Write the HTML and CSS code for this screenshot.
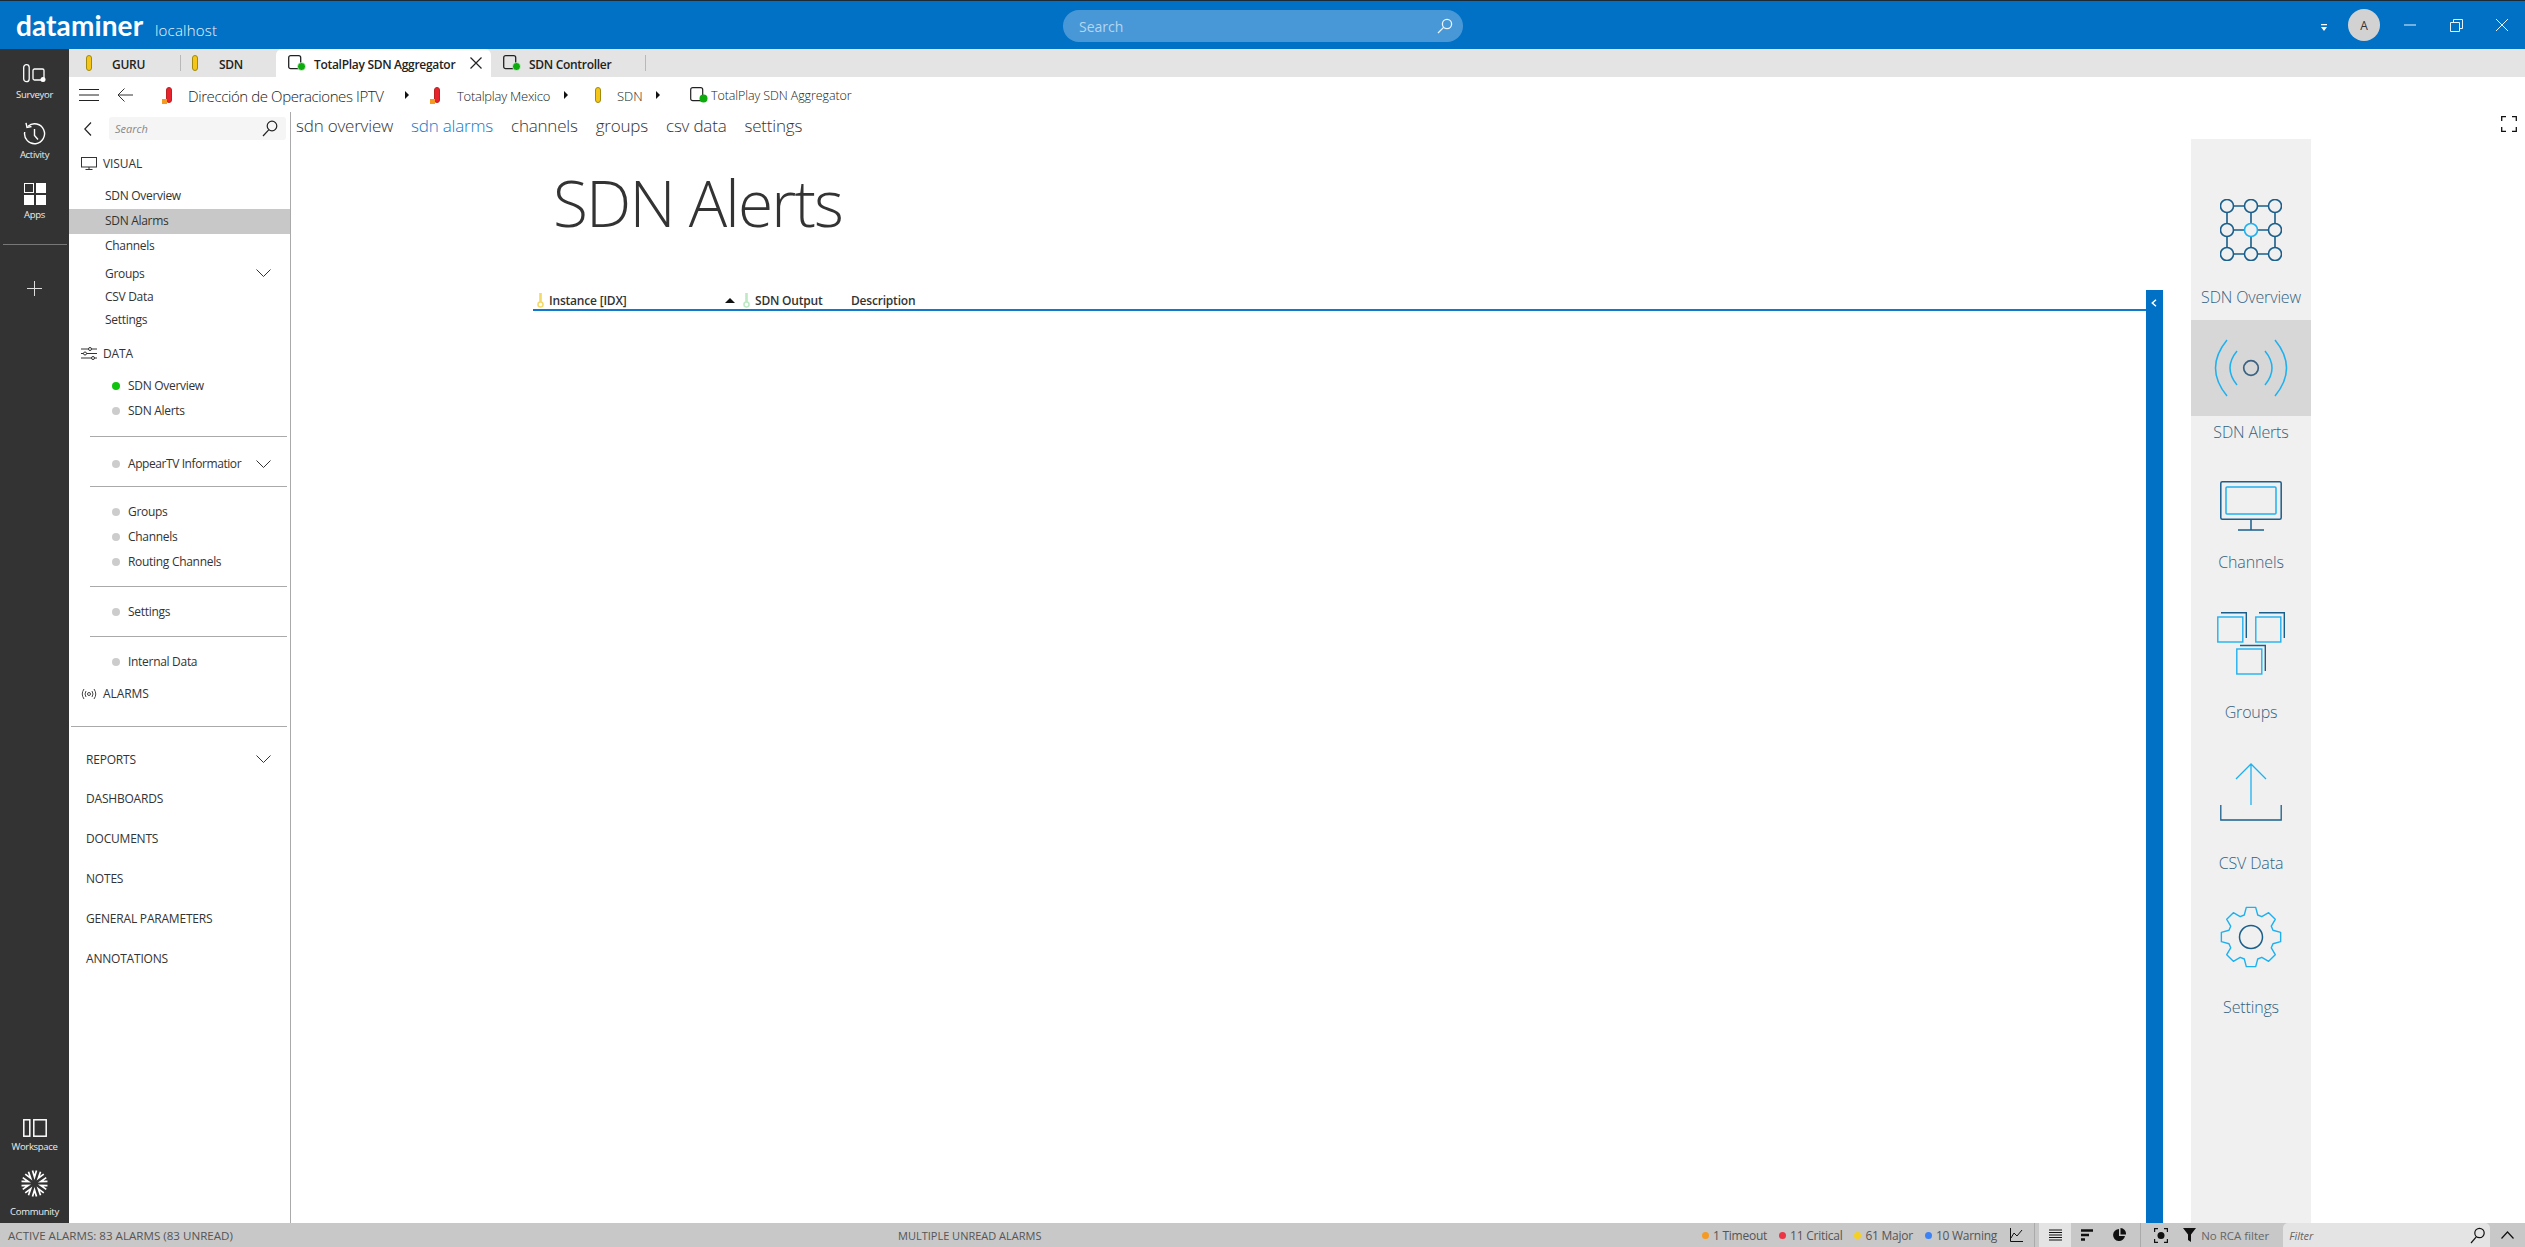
FILE: index.html
```html
<!DOCTYPE html>
<html lang="en">
<head>
<meta charset="utf-8">
<title>DataMiner</title>
<link rel="stylesheet" href="styles.css">
</head>
<body>
<div class="app">
  <header class="topbar">
    <div class="brand"><span class="logo">dataminer</span><span class="host">localhost</span></div>
    <div class="global-search"><span>Search</span>
      <svg width="16" height="16" viewBox="0 0 16 16" class="stroke-white"><circle cx="10" cy="6" r="4.6"/><path d="M6.6 9.400 1 15"/></svg>
    </div>
    <div class="win">
      <svg class="win-drop" width="6" height="7" viewBox="0 0 6 7"><path d="M0 0h6v1.200H0zM0 3h6L3 7z" fill="#fff"/></svg>
      <div class="avatar">A</div>
      <svg class="win-min" width="12" height="2" viewBox="0 0 12 2"><path d="M0 1h12" stroke="#e8f2fa"/></svg>
      <svg class="win-res" width="13" height="13" viewBox="0 0 13 13"><path d="M3.500 3V.5h9v9H10M.5 3.500h9v9h-9z" fill="none" stroke="#e8f2fa"/></svg>
      <svg class="win-close" width="12" height="12" viewBox="0 0 12 12"><path d="M0 0l12 12M12 0 0 12" stroke="#e8f2fa"/></svg>
    </div>
  </header>

  <div class="middle">
    <aside class="rail">
      <div class="rail-top">
        <div class="rail-item r1">
          <svg width="23" height="19" viewBox="0 0 23 19" fill="none" stroke="#fff" stroke-width="1.300"><rect x=".7" y=".7" width="5.500" height="17" rx="2.700"/><rect x="10" y="5" width="11" height="11" rx="1.500"/><circle cx="20" cy="15.500" r="2.500" fill="#fff" stroke="none"/></svg>
          <span>Surveyor</span>
        </div>
        <div class="rail-item r2">
          <svg width="23" height="24" viewBox="0 0 23 24" fill="none" stroke="#fff" stroke-width="1.400"><path d="M5 4.200A10 10 0 1 1 1.700 10"/><path d="M3 .8 4 5.500l4.500-1"/><path d="M11.500 7v6.500l3.500 4"/></svg>
          <span>Activity</span>
        </div>
        <div class="rail-item r3">
          <svg width="22" height="22" viewBox="0 0 22 22"><rect x=".5" y=".5" width="9" height="9" fill="none" stroke="#fff"/><rect x="12" width="10" height="10" fill="#fff"/><rect y="12" width="10" height="10" fill="#fff"/><rect x="12" y="12" width="10" height="10" fill="#fff"/></svg>
          <span>Apps</span>
        </div>
        <div class="rail-rule"></div>
        <svg class="rail-plus" width="15" height="15" viewBox="0 0 15 15"><path d="M7.500 0v15M0 7.500h15" stroke="#ddd"/></svg>
      </div>
      <div class="rail-bottom">
        <div class="rail-item r4">
          <svg width="24" height="18" viewBox="0 0 24 18" fill="none" stroke="#fff" stroke-width="1.500"><rect x=".8" y=".8" width="6" height="16.400"/><rect x="10.800" y=".8" width="12.400" height="16.400"/></svg>
          <span>Workspace</span>
        </div>
        <div class="rail-item r5">
          <svg width="27" height="27" viewBox="-13.500 -13.500 27 27" fill="none" stroke="#fff" stroke-width="1.700">
            <defs><path id="spark" d="M-2-13 0-6.500 2-13"/></defs>
            <use href="#spark"/><use href="#spark" transform="rotate(36)"/><use href="#spark" transform="rotate(72)"/><use href="#spark" transform="rotate(108)"/><use href="#spark" transform="rotate(144)"/><use href="#spark" transform="rotate(180)"/><use href="#spark" transform="rotate(216)"/><use href="#spark" transform="rotate(252)"/><use href="#spark" transform="rotate(288)"/><use href="#spark" transform="rotate(324)"/>
          </svg>
          <span>Community</span>
        </div>
      </div>
    </aside>

    <div class="workspace">
      <nav class="tabs">
        <div class="tab tab-guru"><i class="pill pill-y"></i><b>GURU</b></div>
        <div class="tab tab-sdn"><i class="pill pill-y"></i><b>SDN</b></div>
        <div class="tab tab-active">
          <svg class="el" width="18" height="16" viewBox="0 0 18 16"><rect x=".7" y=".7" width="12" height="13" rx="2" fill="none" stroke="#222" stroke-width="1.300"/><circle cx="13.500" cy="11.500" r="4" fill="#0dab0d" stroke="#fff" stroke-width=".6"/></svg>
          <b>TotalPlay SDN Aggregator</b>
          <svg class="tab-x" width="12" height="12" viewBox="0 0 12 12"><path d="M.5.500l11 11M11.500.5l-11 11" stroke="#222" stroke-width="1.200"/></svg>
        </div>
        <div class="tab tab-ctrl">
          <svg class="el" width="18" height="16" viewBox="0 0 18 16"><rect x=".7" y=".7" width="12" height="13" rx="2" fill="none" stroke="#222" stroke-width="1.300"/><circle cx="13.500" cy="11.500" r="4" fill="#0dab0d" stroke="#fff" stroke-width=".6"/></svg>
          <b>SDN Controller</b>
        </div>
      </nav>

      <div class="crumbs">
        <svg class="c-menu" width="20" height="12" viewBox="0 0 20 12"><path d="M0 .5h20M0 6h20M0 11.500h20" stroke="#222"/></svg>
        <svg class="c-back" width="16" height="14" viewBox="0 0 16 14"><path d="M7.500 .5 1 7l6.500 6.500M1 7h15" fill="none" stroke="#333"/></svg>
        <span class="alarm-pill c-p1"><i class="pill pill-r"></i><em></em></span>
        <span class="c-t1">Dirección de Operaciones IPTV</span>
        <i class="tri c-a1"></i>
        <span class="alarm-pill c-p2"><i class="pill pill-r"></i><em></em></span>
        <span class="c-t2">Totalplay Mexico</span>
        <i class="tri c-a2"></i>
        <i class="pill pill-y c-p3"></i>
        <span class="c-t3">SDN</span>
        <i class="tri c-a3"></i>
        <svg class="c-el" width="18" height="16" viewBox="0 0 18 16"><rect x=".7" y=".7" width="12" height="13" rx="2" fill="none" stroke="#222" stroke-width="1.200"/><circle cx="13.500" cy="11.500" r="4" fill="#0dab0d"/></svg>
        <span class="c-t4">TotalPlay SDN Aggregator</span>
      </div>

      <div class="body">
        <aside class="nav">
          <div class="nav-search">
            <svg width="8" height="14" viewBox="0 0 8 14"><path d="M7 .5.800 7 7 13.500" fill="none" stroke="#222" stroke-width="1.200"/></svg>
            <div class="nav-search-box"><span>Search</span>
              <svg width="16" height="17" viewBox="0 0 16 17" fill="none" stroke="#222" stroke-width="1.200"><circle cx="10" cy="6" r="4.800"/><path d="M6.700 9.800 1 16"/></svg>
            </div>
          </div>

          <div class="sec sec-visual">
            <svg width="16" height="13" viewBox="0 0 16 13" fill="none" stroke="#333"><rect x=".5" y=".5" width="15" height="9.500"/><path d="M8 10v2.500M4.500 12.500h7"/></svg>VISUAL
          </div>
          <div class="visual-list">
            <div class="item">SDN Overview</div>
            <div class="item item-on">SDN Alarms</div>
            <div class="item">Channels</div>
            <div class="item item-groups">Groups
              <svg class="chev" width="15" height="8" viewBox="0 0 15 8"><path d="M.5.500 7.500 7.500 14.500.5" fill="none" stroke="#333"/></svg>
            </div>
            <div class="item item-csv">CSV Data</div>
            <div class="item">Settings</div>
          </div>

          <div class="sec sec-data">
            <svg width="16" height="13" viewBox="0 0 16 13" fill="none" stroke="#333"><path d="M0 2h16M0 6.500h16M0 11h16"/><circle cx="9" cy="2" r="1.500" fill="#fff"/><circle cx="4" cy="6.500" r="1.500" fill="#fff"/><circle cx="12" cy="11" r="1.500" fill="#fff"/></svg>DATA
          </div>
          <div class="grp grp-a">
            <div class="ditem"><i class="dot dot-on"></i>SDN Overview</div>
            <div class="ditem"><i class="dot"></i>SDN Alerts</div>
          </div>
          <div class="grp grp-b">
            <div class="ditem"><i class="dot"></i><span class="appear">AppearTV Informatior</span>
              <svg class="chev" width="15" height="8" viewBox="0 0 15 8"><path d="M.5.500 7.500 7.500 14.500.5" fill="none" stroke="#333"/></svg>
            </div>
          </div>
          <div class="grp">
            <div class="ditem"><i class="dot"></i>Groups</div>
            <div class="ditem"><i class="dot"></i>Channels</div>
            <div class="ditem"><i class="dot"></i>Routing Channels</div>
          </div>
          <div class="grp">
            <div class="ditem"><i class="dot"></i>Settings</div>
          </div>
          <div class="grp-last">
            <div class="ditem"><i class="dot"></i>Internal Data</div>
          </div>
          <div class="sec sec-alarms">
            <svg width="16" height="12" viewBox="0 0 16 12" fill="none" stroke="#444"><path d="M3 1Q-.500 6 3 11M5 3Q3 6 5 9M13 1q3.500 5 0 10M11 3q2 3 0 6"/><circle cx="8" cy="6" r="1.500"/></svg>ALARMS
          </div>
          <div class="top-list">
            <div class="top top-reports">REPORTS
              <svg class="chev" width="15" height="8" viewBox="0 0 15 8"><path d="M.5.500 7.500 7.500 14.500.5" fill="none" stroke="#333"/></svg>
            </div>
            <div class="top">DASHBOARDS</div>
            <div class="top">DOCUMENTS</div>
            <div class="top">NOTES</div>
            <div class="top">GENERAL PARAMETERS</div>
            <div class="top">ANNOTATIONS</div>
          </div>
        </aside>

        <main class="content">
          <div class="subnav">
            <div class="subtabs">
              <span>sdn overview</span><span class="sub-on">sdn alarms</span><span>channels</span><span>groups</span><span>csv data</span><span>settings</span>
            </div>
            <svg class="full" width="16" height="16" viewBox="0 0 16 16"><path d="M.7 5V.7H5M11 .7h4.300V5M15.300 11v4.300H11M5 15.300H.7V11" fill="none" stroke="#111" stroke-width="1.300"/></svg>
          </div>
          <div class="stage">
            <div class="view">
              <h1>SDN Alerts</h1>
              <div class="tablewrap">
                <div class="table">
                  <div class="thead">
                    <div class="th th-inst">
                      <svg width="7" height="16" viewBox="0 0 7 16" fill="none" stroke="#f2d96a" stroke-width="1.600"><circle cx="3.500" cy="12.500" r="2.500"/><path d="M3.500 10V1" stroke-width="2.600"/></svg>
                      <span>Instance [IDX]</span><i class="sort"></i>
                    </div>
                    <div class="th th-out">
                      <svg width="7" height="16" viewBox="0 0 7 16" fill="none" stroke="#bfe8c4" stroke-width="1.600"><circle cx="3.500" cy="12.500" r="2.500"/><path d="M3.500 10V1" stroke-width="2.600"/></svg>
                      <span>SDN Output</span>
                    </div>
                    <div class="th th-desc"><span>Description</span></div>
                  </div>
                </div>
                <div class="bar">
                  <svg width="6" height="8" viewBox="0 0 6 8"><path d="M5 .8 1.300 4 5 7.200" fill="none" stroke="#fff" stroke-width="1.500"/></svg>
                </div>
              </div>
            </div>

            <div class="panel">
              <div class="tile t1">
                <svg width="62" height="62" viewBox="0 0 62 62" fill="none" stroke="#1a5f8c" stroke-width="1.600">
                  <path d="M7 7h48M7 31h48M7 55h48M7 7v48M31 7v48M55 7v48"/>
                  <g fill="#f0f0f0"><circle cx="7" cy="7" r="6.500"/><circle cx="31" cy="7" r="6.500"/><circle cx="55" cy="7" r="6.500"/><circle cx="7" cy="31" r="6.500"/><circle cx="55" cy="31" r="6.500"/><circle cx="7" cy="55" r="6.500"/><circle cx="31" cy="55" r="6.500"/><circle cx="55" cy="55" r="6.500"/><circle cx="31" cy="31" r="6.500" stroke="#1eb1f0"/></g>
                </svg>
                <span>SDN Overview</span>
              </div>
              <div class="tile t2">
                <div class="tile-on">
                  <svg width="76" height="58" viewBox="0 0 76 58" fill="none" stroke="#1eb1f0" stroke-width="1.500">
                    <path d="M14 1Q-9 29 14 57M62 1q23 28 0 56M24 12Q10 29 24 46M52 12q14 17 0 34"/>
                    <circle cx="38" cy="29" r="7.300" stroke="#3b6282" stroke-width="1.700"/>
                  </svg>
                </div>
                <span>SDN Alerts</span>
              </div>
              <div class="tile t3">
                <svg width="62" height="50" viewBox="0 0 62 50" fill="none" stroke-width="1.500">
                  <rect x=".8" y=".8" width="60.400" height="37.400" rx="1.500" stroke="#1a5f8c"/>
                  <rect x="6" y="6" width="50" height="27" rx="1" stroke="#1eb1f0"/>
                  <path d="M31 38v11M18 49h26" stroke="#1a5f8c"/>
                </svg>
                <span>Channels</span>
              </div>
              <div class="tile t4">
                <svg width="68" height="63" viewBox="0 0 68 63" fill="none" stroke-width="1.400">
                  <g stroke="#1a5f8c"><path d="M4 .8h25.300V26M42 .8h25.300V26M23 33.500h25.300V59"/></g>
                  <g stroke="#1eb1f0"><rect x=".8" y="5" width="25" height="25"/><rect x="38.800" y="5" width="25" height="25"/><rect x="19.800" y="37" width="25" height="25"/></g>
                </svg>
                <span>Groups</span>
              </div>
              <div class="tile t5">
                <svg width="62" height="58" viewBox="0 0 62 58" fill="none" stroke-width="1.300">
                  <path d="M16 16 31 1l15 15M31 1v41" stroke="#1eb1f0"/>
                  <path d="M.8 42v15h60.400V42" stroke="#1a5f8c"/>
                </svg>
                <span>CSV Data</span>
              </div>
              <div class="tile t6">
                <svg width="62" height="62" viewBox="-31 -31 62 62" fill="none">
                  <path stroke="#1eb1f0" stroke-width="1.400" stroke-linejoin="round" d="M-6.720-22-4.690-29.630H4.690L6.720-22 10.800-20.310 17.640-24.270 24.270-17.640 20.310-10.800 22-6.720 29.630-4.690V4.690L22 6.720 20.310 10.800 24.270 17.640 17.640 24.270 10.800 20.310 6.720 22 4.690 29.630H-4.690L-6.720 22-10.800 20.310-17.640 24.270-24.270 17.640-20.310 10.800-22 6.720-29.630 4.690V-4.690L-22-6.720-20.310-10.800-24.270-17.640-17.640-24.270-10.800-20.310Z"/>
                  <circle r="11.500" stroke="#1a5f8c" stroke-width="1.500"/>
                </svg>
                <span>Settings</span>
              </div>
            </div>
          </div>
        </main>
      </div>
    </div>
  </div>

  <footer class="status">
    <div class="st-left">ACTIVE ALARMS: 83 ALARMS (83 UNREAD)</div>
    <div class="st-mid">MULTIPLE UNREAD ALARMS</div>
    <div class="st-right">
      <span class="cnt"><i class="cd cd-o"></i>1 Timeout</span>
      <span class="cnt"><i class="cd cd-r"></i>11 Critical</span>
      <span class="cnt"><i class="cd cd-y"></i>61 Major</span>
      <span class="cnt"><i class="cd cd-b"></i>10 Warning</span>
      <svg class="st-chart" width="13" height="14" viewBox="0 0 13 14" fill="none" stroke="#111"><path d="M.5 0v13.500H13M1 10l3-5 3 3 5-6"/></svg>
      <div class="st-views">
        <div class="sv sv-on"><svg width="13" height="12" viewBox="0 0 13 12"><path d="M0 1h13M0 3.500h13M0 6h13M0 8.500h13M0 11h13" stroke="#111" stroke-width="1.200"/></svg></div>
        <div class="sv"><svg width="12" height="12" viewBox="0 0 12 12"><path d="M0 1.500h12M0 6h8M0 10.500h4" stroke="#111" stroke-width="2.400"/></svg></div>
        <div class="sv"><svg width="13" height="14" viewBox="0 0 13 14"><path d="M6 1A6 6 0 1 0 12 8H6Z" fill="#111"/><path d="M7.500 0A6 6 0 0 1 13 6.500H7.500Z" fill="#111"/></svg></div>
      </div>
      <div class="st-rca">
        <svg width="14" height="15" viewBox="0 0 14 15" fill="none" stroke="#111" stroke-width="1.200"><path d="M.6 4V.6H4M10 .6h3.400V4M13.400 11v3.400H10M4 14.400H.6V11"/><circle cx="7" cy="7.500" r="3.500" fill="#111" stroke="none"/></svg>
        <svg class="funnel" width="13" height="14" viewBox="0 0 13 14"><path d="M0 0h13L8 6.500V14L5 12V6.500Z" fill="#111"/></svg>
        <span>No RCA filter</span>
      </div>
      <div class="st-filter"><span>Filter</span>
        <svg width="15" height="17" viewBox="0 0 15 17" fill="none" stroke="#111" stroke-width="1.200"><circle cx="9.500" cy="6" r="4.700"/><path d="M6.300 9.800 1 16"/></svg>
      </div>
      <div class="st-up"><svg width="13" height="8" viewBox="0 0 13 8"><path d="M.5 7.500l6-6.500 6 6.500" fill="none" stroke="#111" stroke-width="1.200"/></svg></div>
    </div>
  </footer>
</div>
</body>
</html>
```

FILE: styles.css
```css
* { box-sizing: border-box; }
html, body { margin: 0; height: 100%; overflow: hidden; }
body { font-family: "Open Sans", "Noto Sans", sans-serif; color: #333; background: #fff; }
svg { display: block; flex: none; }
i, em { font-style: normal; display: block; }

.app { display: flex; flex-direction: column; height: 1247px; }

/* top bar */
.topbar { height: 49px; flex: none; background: #0071c5; border-top: 1px solid #1c2a36; display: flex; align-items: center; position: relative; }
.brand { display: flex; align-items: baseline; padding-left: 16px; width: 1063px; color: #fff; }
.logo { font-family: "Lato", sans-serif; font-weight: 700; font-size: 28px; letter-spacing: .1px; line-height: 30px; width: 139px; }
.host { font-size: 15px; font-weight: 300; color: #f0f6fb; letter-spacing: .2px; }
.global-search { width: 400px; height: 32px; margin-top: 2px; border-radius: 16px; background: #4898d8; display: flex; align-items: center; justify-content: space-between; padding: 0 10px 0 16px; font-size: 14px; color: #b4d6f0; }
.stroke-white { fill: none; stroke: #eaf4fb; stroke-width: 1.300; }
.win { position: relative; flex: 1; height: 48px; }
.win-drop { position: absolute; left: 858px; top: 23px; }
.avatar { position: absolute; left: 885px; top: 8px; width: 32px; height: 32px; border-radius: 50%; background: #d2d2d2; color: #333; font-size: 12px; display: flex; align-items: center; justify-content: center; }
.win-min { position: absolute; left: 941px; top: 23px; }
.win-res { position: absolute; left: 987px; top: 18px; }
.win-close { position: absolute; left: 1033px; top: 18px; }

.middle { flex: 1; min-height: 0; display: flex; }

/* rail */
.rail { width: 69px; flex: none; background: #333; color: #eee; display: flex; flex-direction: column; justify-content: space-between; font-size: 9.500px; }
.rail-top, .rail-bottom { display: flex; flex-direction: column; align-items: center; }
.rail-item { display: flex; flex-direction: column; align-items: center; width: 100%; }
.rail-item span { line-height: 14px; letter-spacing: -.3px; }
.r1 { padding-top: 15px; }
.r1 span { margin-top: 5px; }
.r2 { padding-top: 20px; }
.r2 span { margin-top: 2px; }
.r3 { padding-top: 21px; }
.r3 span { margin-top: 3px; }
.rail-rule { width: 64px; height: 1px; margin-top: 22px; background: #777; }
.rail-plus { margin-top: 36px; }
.r4 span { margin-top: 3px; }
.r5 { padding: 16px 0 4px; }
.r5 span { margin-top: 8px; }

.workspace { flex: 1; min-width: 0; display: flex; flex-direction: column; }

/* tabs */
.tabs { height: 28px; flex: none; background: #e4e4e4; display: flex; font-size: 12px; }
.tabs b { font-weight: 600; color: #222; letter-spacing: -.3px; padding-top: 2px; }
.tab { display: flex; align-items: center; height: 28px; }
.pill { width: 6px; height: 16px; border-radius: 3px; border: 1px solid #a08a10; }
.pill-y { background: #f5c518; }
.pill-r { background: #e8232e; border-color: #b22; }
.tab-guru { width: 112px; padding-left: 17px; position: relative; }
.tab-guru b { margin-left: 20px; }
.tab-guru::after, .tab-ctrl::after { content: ""; position: absolute; right: 0; top: 6px; bottom: 6px; width: 1px; background: #b8b8b8; }
.tab-sdn { width: 95px; padding-left: 11px; }
.tab-sdn b { margin-left: 21px; }
.tab-active { width: 215px; background: #fff; border-radius: 6px 6px 0 0; padding-left: 12px; }
.tab-active b { margin-left: 8px; }
.tab-x { margin-left: 15px; }
.tab-ctrl { width: 155px; padding-left: 12px; position: relative; }
.tab-ctrl b { margin-left: 8px; }

/* breadcrumb */
.crumbs { height: 35px; flex: none; display: flex; align-items: center; font-weight: 300; color: #222; padding-left: 10px; }
.c-t1, .c-t2, .c-t3, .c-t4 { padding-top: 2px; }
.c-back { margin-left: 18px; }
.alarm-pill { display: block; position: relative; }
.alarm-pill em { position: absolute; left: -4px; bottom: -1px; width: 5px; height: 5px; background: #f59a23; }
.c-p1 { margin-left: 33px; }
.c-t1 { margin-left: 16px; font-size: 15px; letter-spacing: -.4px; width: 194px; white-space: nowrap; }
.tri { width: 0; height: 0; border-left: 4px solid #111; border-top: 4px solid transparent; border-bottom: 4px solid transparent; }
.c-a1 { margin-left: 23px; }
.c-p2 { margin-left: 25px; }
.c-t2 { margin-left: 17px; font-size: 13px; letter-spacing: -.25px; width: 91px; white-space: nowrap; }
.c-a2 { margin-left: 16px; }
.c-p3 { margin-left: 27px; }
.c-t3 { margin-left: 16px; font-size: 13px; width: 24px; }
.c-a3 { margin-left: 15px; }
.c-el { margin-left: 30px; }
.c-t4 { margin-left: 3px; font-size: 12.500px; letter-spacing: -.1px; white-space: nowrap; }

.body { flex: 1; min-height: 0; display: flex; }

/* nav */
.nav { width: 222px; flex: none; border-right: 1px solid #aaa; font-size: 12px; color: #333; }
.nav-search { height: 34px; display: flex; align-items: center; padding-left: 15px; }
.nav-search-box { width: 177px; height: 23px; margin: 0 0 1px 17px; padding: 0 8px 0 6px; background: #f5f5f5; border-radius: 3px; display: flex; align-items: center; justify-content: space-between; font-style: italic; color: #888; font-size: 11px; }
.sec { height: 25px; display: flex; align-items: center; gap: 6px; padding-left: 12px; font-size: 12px; letter-spacing: -.1px; }
.sec-visual { margin-top: 5px; }
.visual-list { margin-top: 8px; }
.item { height: 25px; display: flex; align-items: center; padding: 0 0 2px 36px; letter-spacing: -.3px; position: relative; }
.item-on { background: #c8c8c8; }
.item-groups { height: 28px; padding-bottom: 0; }
.item-csv { height: 21px; }
.chev { position: absolute; left: 187px; top: 50%; margin-top: -4px; }
.sec-data { margin-top: 8px; }
.grp { margin-left: 21px; padding: 12px 0; border-bottom: 1px solid #aaa; margin-right: 3px; }
.grp-a { padding-top: 7px; padding-bottom: 13px; }
.grp-b { padding: 14px 0 10px; }
.grp-last { padding: 12px 0 0; margin-left: 21px; }
.ditem { height: 25px; display: flex; align-items: center; padding-left: 22px; position: relative; letter-spacing: -.3px; }
.ditem .chev { left: 166px; }
.appear { white-space: nowrap; letter-spacing: -.42px; }
.dot { width: 8px; height: 8px; border-radius: 50%; background: #ccc; margin-right: 8px; }
.dot-on { background: #0fc30f; }
.sec-alarms { margin-top: 7px; }
.top-list { margin: 20px 3px 0 2px; border-top: 1px solid #aaa; padding-top: 13px; }
.top { height: 40px; display: flex; align-items: center; padding-left: 15px; position: relative; letter-spacing: -.2px; }
.top-reports { height: 38px; }
.top .chev { left: 185px; }

/* content */
.content { flex: 1; min-width: 0; display: flex; flex-direction: column; }
.subnav { height: 27px; flex: none; display: flex; align-items: center; justify-content: space-between; padding: 0 8px 0 5px; }
.subtabs { display: flex; gap: 18px; font-size: 17px; font-weight: 300; color: #333; letter-spacing: -.2px; }
.sub-on { color: #0f7acb; }
.full { margin-top: -3px; }
.stage { flex: 1; min-height: 0; display: flex; }
.view { width: 1900px; flex: none; padding-left: 242px; padding-right: 28px; display: flex; flex-direction: column; }
h1 { margin: 0; height: 151px; padding-left: 20px; padding-top: 22px; font-size: 64px; font-weight: 300; line-height: 84px; color: #333; letter-spacing: -1.8px; flex: none; }
.tablewrap { flex: 1; display: flex; min-height: 0; }
.table { flex: 1; min-width: 0; }
.thead { height: 21px; border-bottom: 2px solid #0f7acb; display: flex; font-size: 12px; font-weight: 600; color: #333; letter-spacing: -.2px; }
.th { display: flex; align-items: center; gap: 5px; position: relative; padding-top: 1px; }
.th-inst { width: 210px; padding-left: 4px; }
.th-out { width: 108px; }
.th-desc { flex: 1; }
.sort { position: absolute; left: 192px; top: 8px; width: 0; height: 0; border-left: 5px solid transparent; border-right: 5px solid transparent; border-bottom: 5px solid #111; }
.bar { width: 17px; flex: none; background: #0071c5; padding: 9px 0 0 5px; }

/* right panel */
.panel { width: 120px; flex: none; background: #f0f0f0; display: flex; flex-direction: column; align-items: stretch; }
.tile { display: flex; flex-direction: column; align-items: center; font-size: 16px; font-weight: 300; color: #33627f; letter-spacing: -.15px; }
.tile > span { height: 30px; line-height: 30px; white-space: nowrap; }
.t1 { padding-top: 60px; height: 181px; }
.t1 > span { margin-top: 21px; }
.t2 { height: 127px; }
.tile-on { width: 100%; height: 96px; background: #d7d7d7; display: flex; align-items: center; justify-content: center; margin-bottom: 1px; }
.t3 { padding-top: 34px; height: 130px; }
.t3 > span { margin-top: 16px; }
.t4 { padding-top: 35px; height: 150px; }
.t4 > span { margin-top: 22px; }
.t5 { padding-top: 36px; height: 151px; }
.t5 > span { margin-top: 27px; }
.t6 { padding-top: 28px; }
.t6 > span { margin-top: 24px; }

/* status */
.status { height: 24px; flex: none; background: #c8c8c8; display: flex; align-items: center; position: relative; font-size: 11px; color: #555; }
.st-left { position: absolute; left: 8px; font-size: 11.600px; }
.st-mid { position: absolute; left: 898px; }
.st-right { position: absolute; left: 1702px; right: 0; top: 0; bottom: 0; display: flex; align-items: center; font-size: 12px; }
.cnt { display: flex; align-items: center; gap: 4px; margin-right: 12px; white-space: nowrap; letter-spacing: -.25px; }
.cd { width: 7px; height: 7px; border-radius: 50%; }
.cd-o { background: #f59a23; }
.cd-r { background: #ee3344; }
.cd-y { background: #f5d020; }
.cd-b { background: #3b82f6; }
.st-chart { margin-left: 1px; }
.st-views { margin-left: 11px; height: 24px; display: flex; border-left: 1px solid #aaa; border-right: 1px solid #aaa; padding: 0 5px 0 4px; }
.sv { width: 32px; height: 24px; display: flex; align-items: center; justify-content: center; }
.sv-on { background: #e4e4e4; }
.st-rca { display: flex; align-items: center; margin-left: 13px; width: 129px; font-size: 11.500px; }
.funnel { margin-left: 15px; }
.st-rca span { margin-left: 5px; white-space: nowrap; color: #666; }
.st-filter { width: 207px; height: 24px; background: #e4e4e4; border-radius: 5px 5px 0 0; display: flex; align-items: center; justify-content: space-between; padding: 0 5px 0 6px; font-style: italic; color: #666; font-size: 11px; }
.st-up { flex: 1; display: flex; justify-content: center; }
```
